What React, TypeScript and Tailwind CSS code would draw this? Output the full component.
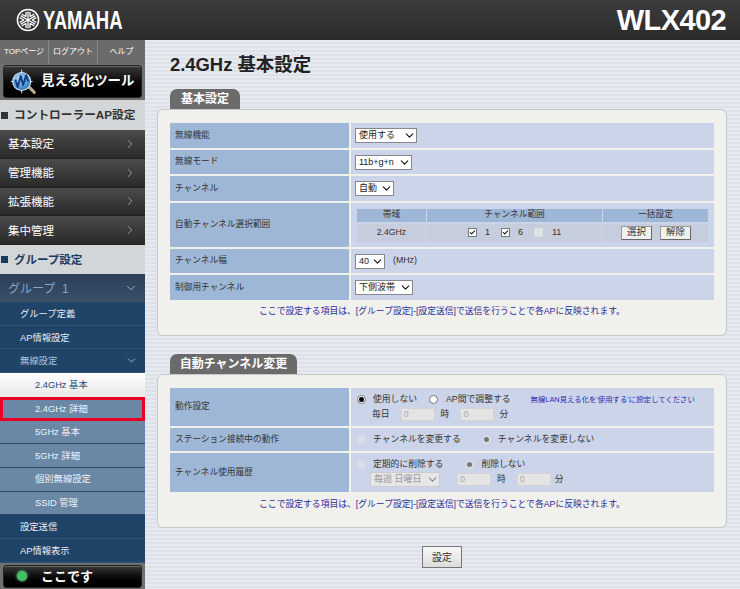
import type { ReactNode } from 'react';
import { Check, ChevronDown, ChevronRight } from 'lucide-react';

const jp = "font-['Liberation_Sans','Noto_Sans_CJK_JP',sans-serif]";

function YamahaMark() {
  return (
    <svg width="24" height="24" viewBox="0 0 24 24" fill="none" stroke="#fff">
      <circle cx="12" cy="12" r="10.6" strokeWidth="1.5" />
      <g strokeWidth="1.3" strokeLinecap="square">
        <path d="M12 12V4.2M12 12v7.8M5.2 8.1 12 12l6.8-3.9M5.2 15.9 12 12l6.8 3.9" />
        <path d="M10 4.6v3.6M14 4.6v3.6M10 15.8v3.6M14 15.8v3.6M4.3 10 7.4 11.800M6.300 6.500l3.100 1.800M19.700 10l-3.100 1.800M17.700 6.500l-3.100 1.800M4.300 14l3.100-1.800M6.300 17.500l3.100-1.800M19.700 14l-3.100-1.800M17.700 17.500l-3.100-1.800" />
      </g>
    </svg>
  );
}

function ScopeIcon() {
  return (
    <svg width="27" height="27" viewBox="0 0 30 30" fill="none">
      <defs>
        <radialGradient id="lens" cx="0.4" cy="0.35" r="0.7">
          <stop offset="0" stopColor="#bfe0f6" />
          <stop offset="0.7" stopColor="#4f93cf" />
          <stop offset="1" stopColor="#2a69a8" />
        </radialGradient>
      </defs>
      <path d="M21 21 27 27" stroke="#b9a98a" strokeWidth="3.400" strokeLinecap="round" />
      <path d="M13 2v3M13 25v3M1 15h3M22 15h3" stroke="#cfe6f7" strokeWidth="1.200" />
      <circle cx="13" cy="15" r="10" fill="url(#lens)" stroke="#d7ebf8" strokeWidth="1.200" />
      <path d="M6 13l2.500 8 3.500-12 2.500 10 3.500-11 2 7" stroke="#123f86" strokeWidth="2.200" strokeLinejoin="round" />
    </svg>
  );
}

function BlackButton({ children }: { children: ReactNode }) {
  return (
    <button className="flex w-full h-full items-center whitespace-nowrap rounded-[3px] border border-[#222] bg-gradient-to-b from-[#3a3a3a] via-[#0c0c0c] to-[#000] text-white shadow-[inset_0_1px_0_#666]">
      {children}
    </button>
  );
}

function DarkItem({ label }: { label: string }) {
  return (
    <div className="flex h-[28.75px] items-center justify-between pl-2 pr-2 bg-gradient-to-b from-[#4c4c4c] via-[#3a3a3a] to-[#2a2a2a] border-b border-[#222] text-[11.5px] text-white">
      <span className="pt-[2px]">{label}</span>
      <ChevronRight className="h-[14px] w-[14px] text-[#aaa]" strokeWidth={1.500} />
    </div>
  );
}

function SubItem({ label, chevron }: { label: string; chevron?: boolean }) {
  return (
    <div className="flex h-[23.73px] items-center justify-between pl-[20px] pr-[4px] bg-[#1f4468] border-b border-[#2f5478] text-[9.3px] text-[#e8eef5]">
      <span className={chevron ? 'pt-[3px] text-[#a9c4e2]' : 'pt-[3px]'}>{label}</span>
      {chevron && <ChevronDown className="h-[13px] w-[13px] text-[#b8cbe0] mr-[3px]" strokeWidth={1.500} />}
    </div>
  );
}

function WlanItem({ label, active, marked }: { label: string; active?: boolean; marked?: boolean }) {
  if (active) {
    return (
      <div className="flex h-[23.73px] items-center pl-[35px] pt-[2px] bg-gradient-to-b from-[#fff] to-[#e8e8e8] text-[9.3px] text-[#1f4a80]">
        {label}
      </div>
    );
  }
  return (
    <div
      className={`flex h-[23.73px] items-center pt-[2px] bg-[#6a87a6] text-[9.3px] text-[#eef3f8] ${
        marked ? 'border-[3px] border-[#ea0020] pl-[32px]' : 'border-b border-[#2d4a68] pl-[35px]'
      }`}
    >
      {label}
    </div>
  );
}

function Sidebar() {
  return (
    <aside className="flex w-[145px] shrink-0 flex-col bg-[#6f6f6f]">
      <div className="flex h-[24px] items-center bg-[#6b6b6b] text-[8px] text-white">
        <span className="flex h-full w-[49px] items-center justify-center border-r border-[#8a8a8a]">TOPページ</span>
        <span className="flex h-full w-[49px] items-center justify-center border-r border-[#8a8a8a]">ログアウト</span>
        <span className="flex h-full flex-1 items-center justify-center">ヘルプ</span>
      </div>
      <div className="h-[36px] px-[3px] pt-[1px] pb-[2px]">
        <BlackButton>
          <span className="ml-[6px] mr-[4px] flex"><ScopeIcon /></span>
          <span className="text-[13.4px] font-bold">見える化ツール</span>
        </BlackButton>
      </div>
      <div className="flex h-[30px] items-center gap-[6px] bg-[#d3d6d9] pl-[1px] text-[11.7px] font-bold text-[#333]">
        <span className="h-[7px] w-[7px] bg-[#333]" />
        <span>コントローラーAP設定</span>
      </div>
      <DarkItem label="基本設定" />
      <DarkItem label="管理機能" />
      <DarkItem label="拡張機能" />
      <DarkItem label="集中管理" />
      <div className="flex h-[29px] items-center gap-[6px] bg-[#d3d6d9] pl-[1px] text-[11.5px] font-bold text-[#1c3a5e]">
        <span className="h-[7px] w-[7px] bg-current" />
        <span className="pt-[2px]">グループ設定</span>
      </div>
      <div className="flex h-[28px] items-center justify-between bg-gradient-to-b from-[#2b3f57] to-[#3c5069] pl-2 pr-[7px] text-[12px] text-[#86a3c9]">
        <span className="pt-[2px]">グループ&nbsp;&nbsp;1</span>
        <ChevronDown className="h-[14px] w-[14px] text-[#aebcd0]" strokeWidth={1.500} />
      </div>
      <SubItem label="グループ定義" />
      <SubItem label="AP情報設定" />
      <SubItem label="無線設定" chevron />
      <WlanItem label="2.4GHz 基本" active />
      <WlanItem label="2.4GHz 詳細" marked />
      <WlanItem label="5GHz 基本" />
      <WlanItem label="5GHz 詳細" />
      <WlanItem label="個別無線設定" />
      <WlanItem label="SSID 管理" />
      <SubItem label="設定送信" />
      <SubItem label="AP情報表示" />
      <div className="h-[26px] px-[3px] pt-[2px] pb-[1px]">
        <BlackButton>
          <span className="ml-[13px] mr-[14px] h-[10px] w-[10px] rounded-full bg-[#3fc25f] shadow-[0_0_3px_#7fe89a]" />
          <span className="text-[13px] font-bold">ここです</span>
        </BlackButton>
      </div>
    </aside>
  );
}

function Row({ label, height, children }: { label: string; height: string; children: ReactNode }) {
  return (
    <div className={`flex gap-[2px] ${height}`}>
      <div className="flex w-[179px] shrink-0 items-center bg-[#9fb7d6] pl-[5px] text-[8.7px] text-[#333]">{label}</div>
      <div className="flex flex-1 items-center whitespace-nowrap bg-[#cbd4e8] pl-[4px] text-[8.8px] text-[#333]">{children}</div>
    </div>
  );
}

function Sel({ options, width, disabled }: { options: string; width: string; disabled?: boolean }) {
  return (
    <span className={`relative inline-flex h-[15px] ${width}`}>
      <select
        disabled={disabled}
        className="h-full w-full appearance-none border border-[#888] bg-white pl-[3px] text-[9px] text-[#222] disabled:border-[#ccc] disabled:bg-[#e6e6e6] disabled:text-[#999]"
      >
        <option>{options}</option>
      </select>
      <ChevronDown
        className={`pointer-events-none absolute right-[1px] top-[1px] h-[13px] w-[13px] ${disabled ? 'text-[#888]' : 'text-[#111]'}`}
        strokeWidth={2}
      />
    </span>
  );
}

function Tick({ on, disabled }: { on?: boolean; disabled?: boolean }) {
  return (
    <span className={`flex h-[9px] w-[9px] items-center justify-center border ${disabled ? 'border-[#ddd] bg-[#dfe2e6]' : 'border-[#777] bg-white'}`}>
      {on && <Check className="h-[9px] w-[9px] text-black" strokeWidth={3.500} />}
    </span>
  );
}

function Radio({ on, disabled }: { on?: boolean; disabled?: boolean }) {
  return (
    <span className={`flex h-[9px] w-[9px] shrink-0 items-center justify-center rounded-full border ${disabled ? 'border-[#d8dbe2] bg-[#dcdfe6]' : 'border-[#777] bg-white'}`}>
      {on && <span className={`h-[5px] w-[5px] rounded-full ${disabled ? 'bg-[#777]' : 'bg-black'}`} />}
    </span>
  );
}

function Num() {
  return (
    <input
      disabled
      value="0"
      readOnly
      className="h-[13px] w-[34px] border border-[#d4d4d4] bg-[#e4e4e4] pl-[2px] text-[9px] text-[#aaa]"
    />
  );
}

function SmallBtn({ label }: { label: string }) {
  return (
    <button className="flex h-[14px] w-[31px] items-center justify-center border border-[#999] border-b-[#666] border-r-[#666] bg-[#f0f0f0] text-[9.5px] text-[#333]">
      {label}
    </button>
  );
}

function Note() {
  return (
    <p className="text-center text-[8.8px] text-[#2a2a9a]">
      ここで設定する項目は、[グループ設定]-[設定送信]で送信を行うことで各APに反映されます。
    </p>
  );
}

function Panel({ title, tabWidth, children, height }: { title: string; tabWidth: string; height: string; children: ReactNode }) {
  return (
    <section>
      <div className={`ml-[13px] flex h-[20px] ${tabWidth} items-center justify-center rounded-t-[7px] bg-[#6b6b6b] text-[12px] font-bold text-white`}>
        {title}
      </div>
      <div className={`${height} rounded-[6px] border border-[#c6c9c8] bg-[#f0f1ec] px-[12px] pt-[13px]`}>{children}</div>
    </section>
  );
}

function ChannelTable() {
  return (
    <div className="ml-[2px] flex w-[351px] flex-col gap-[2px] text-[8.7px] text-[#333]">
      <div className="flex h-[13px] gap-[1px]">
        <div className="flex w-[69px] items-center justify-center bg-[#9fb7d6]">帯域</div>
        <div className="flex w-[175px] items-center justify-center bg-[#9fb7d6]">チャンネル範囲</div>
        <div className="flex flex-1 items-center justify-center bg-[#9fb7d6]">一括設定</div>
      </div>
      <div className="flex h-[18px] gap-[1px]">
        <div className="flex w-[69px] items-center justify-center bg-[#c6cede]">2.4GHz</div>
        <div className="flex w-[175px] items-center bg-[#c6cede] pl-[41px] text-[9px]">
          <Tick on />
          <span className="ml-[8px] w-[16px]">1</span>
          <Tick on />
          <span className="ml-[8px] w-[16px]">6</span>
          <Tick disabled />
          <span className="ml-[9px]">11</span>
        </div>
        <div className="flex flex-1 items-center gap-[8px] bg-[#c6cede] pl-[18px]">
          <SmallBtn label="選択" />
          <SmallBtn label="解除" />
        </div>
      </div>
    </div>
  );
}

export default function App() {
  return (
    <div className={`flex h-[589px] w-[740px] flex-col overflow-hidden ${jp}`}>
      <header className="flex h-[40px] shrink-0 items-center justify-between bg-gradient-to-b from-[#3d3d3d] to-[#2a2a2a] pl-[16px] pr-[14px] text-white">
        <div className="flex items-center gap-[3px]">
          <YamahaMark />
          <span className="w-[80px] origin-left scale-x-[0.74] whitespace-nowrap text-[25px] font-bold leading-none">YAMAHA</span>
        </div>
        <span className="text-[29px] font-bold leading-none tracking-[-0.6px]">WLX402</span>
      </header>
      <div className="flex flex-1">
        <Sidebar />
        <main className="flex-1 bg-[#e3e7ed] bg-[repeating-linear-gradient(180deg,#e6e9ef_0,#e6e9ef_2px,#dde1e8_2px,#dde1e8_4px)] pl-[12px] pr-[13px]">
          <h1 className="ml-[13px] mt-[14px] h-[35px] text-[18.4px] font-bold leading-[22px] text-[#222]">2.4GHz 基本設定</h1>
          <Panel title="基本設定" tabWidth="w-[70px]" height="h-[227px]">
            <div className="flex flex-col gap-[2px]">
              <Row label="無線機能" height="h-[25px]">
                <Sel options="使用する" width="w-[62px]" />
              </Row>
              <Row label="無線モード" height="h-[24px]">
                <Sel options="11b+g+n" width="w-[57px]" />
              </Row>
              <Row label="チャンネル" height="h-[25px]">
                <Sel options="自動" width="w-[39px]" />
              </Row>
              <Row label="自動チャンネル選択範囲" height="h-[44px]">
                <ChannelTable />
              </Row>
              <Row label="チャンネル幅" height="h-[24px]">
                <Sel options="40" width="w-[30px]" />
                <span className="ml-[8px]">(MHz)</span>
              </Row>
              <Row label="制御用チャンネル" height="h-[25px]">
                <Sel options="下側波帯" width="w-[58px]" />
              </Row>
            </div>
            <div className="mt-[5px]">
              <Note />
            </div>
          </Panel>
          <div className="mt-[18px]">
            <Panel title="自動チャンネル変更" tabWidth="w-[127px]" height="h-[154px]">
              <div className="flex flex-col gap-[2px]">
                <Row label="動作設定" height="h-[38px]">
                  <div className="flex flex-col gap-[2px] pl-[2px]">
                    <div className="flex items-center">
                      <Radio on />
                      <span className="ml-[7px]">使用しない</span>
                      <span className="ml-[12px]"><Radio /></span>
                      <span className="ml-[8px]">AP間で調整する</span>
                      <span className="ml-[20px] text-[7.4px] text-[#2a2ab0]">無線LAN見える化を'使用する'に設定してください</span>
                    </div>
                    <div className="flex items-center pl-[15px]">
                      <span>毎日</span>
                      <span className="ml-[11px] flex"><Num /></span>
                      <span className="ml-[6px]">時</span>
                      <span className="ml-[11px] flex"><Num /></span>
                      <span className="ml-[5px]">分</span>
                    </div>
                  </div>
                </Row>
                <Row label="ステーション接続中の動作" height="h-[23px]">
                  <div className="flex items-center pl-[2px]">
                    <Radio disabled />
                    <span className="ml-[7px]">チャンネルを変更する</span>
                    <span className="ml-[21px]"><Radio on disabled /></span>
                    <span className="ml-[7px]">チャンネルを変更しない</span>
                  </div>
                </Row>
                <Row label="チャンネル使用履歴" height="h-[39px]">
                  <div className="flex flex-col gap-[1px] pl-[2px]">
                    <div className="flex items-center">
                      <Radio disabled />
                      <span className="ml-[7px]">定期的に削除する</span>
                      <span className="ml-[22px]"><Radio on disabled /></span>
                      <span className="ml-[7px]">削除しない</span>
                    </div>
                    <div className="flex items-center pl-[13px]">
                      <Sel options="毎週 日曜日" width="w-[70px]" disabled />
                      <span className="ml-[17px] flex"><Num /></span>
                      <span className="ml-[6px]">時</span>
                      <span className="ml-[11px] flex"><Num /></span>
                      <span className="ml-[4px]">分</span>
                    </div>
                  </div>
                </Row>
              </div>
              <div className="mt-[6px]">
                <Note />
              </div>
            </Panel>
          </div>
          <div className="mt-[18px] flex justify-center">
            <button className="h-[22px] w-[40px] border border-[#777] bg-gradient-to-b from-[#f7f7f7] to-[#dcdcdc] text-[10px] text-[#333]">設定</button>
          </div>
        </main>
      </div>
    </div>
  );
}
